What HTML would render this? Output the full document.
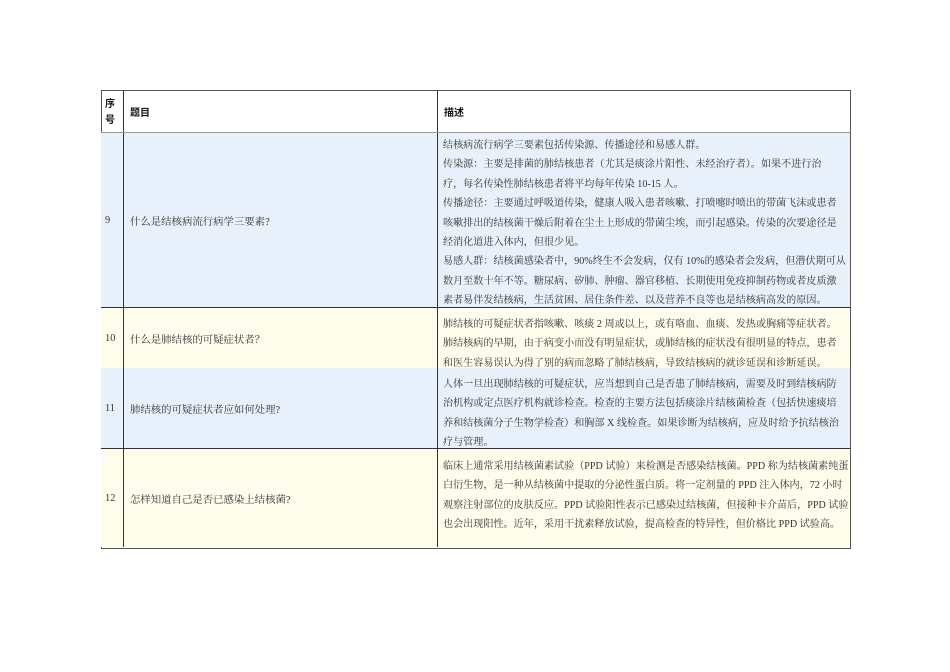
<!DOCTYPE html>
<html><head><meta charset="utf-8"><style>
body{margin:0;background:#fff;width:950px;height:672px;position:relative;font-family:"Liberation Serif","Noto Serif CJK SC",serif;font-size:10.4px;color:#333;}
.r{position:absolute;left:101px;width:749px;}
.c{position:absolute;top:0;bottom:0;}
.n{left:0;width:22px;}
.q{left:22px;width:314px;border-left:1px solid #333;}
.d{left:336px;width:412px;border-left:1px solid #333;overflow:hidden;}
.v{display:flex;align-items:center;height:100%;padding-left:6px;box-sizing:border-box;}
.t{padding-left:5px;line-height:19.4px;white-space:nowrap;font-size:10.1px;}
.b{background:#e8f1fb;} .y{background:#fefdec;}
</style></head><body>
<div style="position:absolute;left:101px;top:90px;width:748px;height:457px;border:1px solid #555;"></div>
<div class="r" style="top:91px;height:41px;border-bottom:1px solid #999;font-weight:bold;font-family:'Liberation Sans','Noto Sans CJK SC',sans-serif;font-size:10px;color:#111;">
<div class="c n" style="padding:6px 0 0 4px;line-height:16px;">序<br>号</div>
<div class="c q"><div class="v">题目</div></div>
<div class="c d"><div class="v">描述</div></div></div>
<div class="r b" style="top:133px;height:174px;border-bottom:1px solid #333;">
<div class="c n"><div class="v" style="padding-left:4px">9</div></div>
<div class="c q"><div class="v">什么是结核病流行病学三要素?</div></div>
<div class="c d"><div class="t" style="padding-top:3px"><div>结核病流行病学三要素包括传染源、传播途径和易感人群。</div><div>传染源：主要是排菌的肺结核患者（尤其是痰涂片阳性、未经治疗者）。如果不进行治</div><div>疗，每名传染性肺结核患者将平均每年传染 10-15 人。</div><div>传播途径：主要通过呼吸道传染，健康人吸入患者咳嗽、打喷嚏时喷出的带菌飞沫或患者</div><div>咳嗽排出的结核菌干燥后附着在尘土上形成的带菌尘埃，而引起感染。传染的次要途径是</div><div>经消化道进入体内，但很少见。</div><div>易感人群：结核菌感染者中，90%终生不会发病，仅有 10%的感染者会发病，但潜伏期可从</div><div>数月至数十年不等。糖尿病、矽肺、肿瘤、器官移植、长期使用免疫抑制药物或者皮质激</div><div>素者易伴发结核病，生活贫困、居住条件差、以及营养不良等也是结核病高发的原因。</div></div></div></div>
<div class="r y" style="top:308px;height:60px;">
<div class="c n"><div class="v" style="padding-left:4px">10</div></div>
<div class="c q"><div class="v">什么是肺结核的可疑症状者？</div></div>
<div class="c d"><div class="t" style="padding-top:7px"><div>肺结核的可疑症状者指咳嗽、咳痰 2 周或以上，或有咯血、血痰、发热或胸痛等症状者。</div><div>肺结核病的早期，由于病变小而没有明显症状，或肺结核的症状没有很明显的特点，患者</div><div>和医生容易误认为得了别的病而忽略了肺结核病，导致结核病的就诊延误和诊断延误。</div></div></div></div>
<div class="r b" style="top:368px;height:80px;border-bottom:1px solid #333;">
<div class="c n"><div class="v" style="padding-left:4px">11</div></div>
<div class="c q"><div class="v">肺结核的可疑症状者应如何处理?</div></div>
<div class="c d"><div class="t" style="padding-top:7px"><div>人体一旦出现肺结核的可疑症状，应当想到自己是否患了肺结核病，需要及时到结核病防</div><div>治机构或定点医疗机构就诊检查。检查的主要方法包括痰涂片结核菌检查（包括快速痰培</div><div>养和结核菌分子生物学检查）和胸部 X 线检查。如果诊断为结核病，应及时给予抗结核治</div><div>疗与管理。</div></div></div></div>
<div class="r y" style="top:449px;height:98px;">
<div class="c n"><div class="v" style="padding-left:4px">12</div></div>
<div class="c q"><div class="v">怎样知道自己是否已感染上结核菌?</div></div>
<div class="c d"><div class="t" style="padding-top:8px"><div>临床上通常采用结核菌素试验（PPD 试验）来检测是否感染结核菌。PPD 称为结核菌素纯蛋</div><div>白衍生物，是一种从结核菌中提取的分泌性蛋白质。将一定剂量的 PPD 注入体内，72 小时</div><div>观察注射部位的皮肤反应。PPD 试验阳性表示已感染过结核菌，但接种卡介苗后，PPD 试验</div><div>也会出现阳性。近年，采用干扰素释放试验，提高检查的特异性，但价格比 PPD 试验高。</div></div></div></div>
</body></html>
